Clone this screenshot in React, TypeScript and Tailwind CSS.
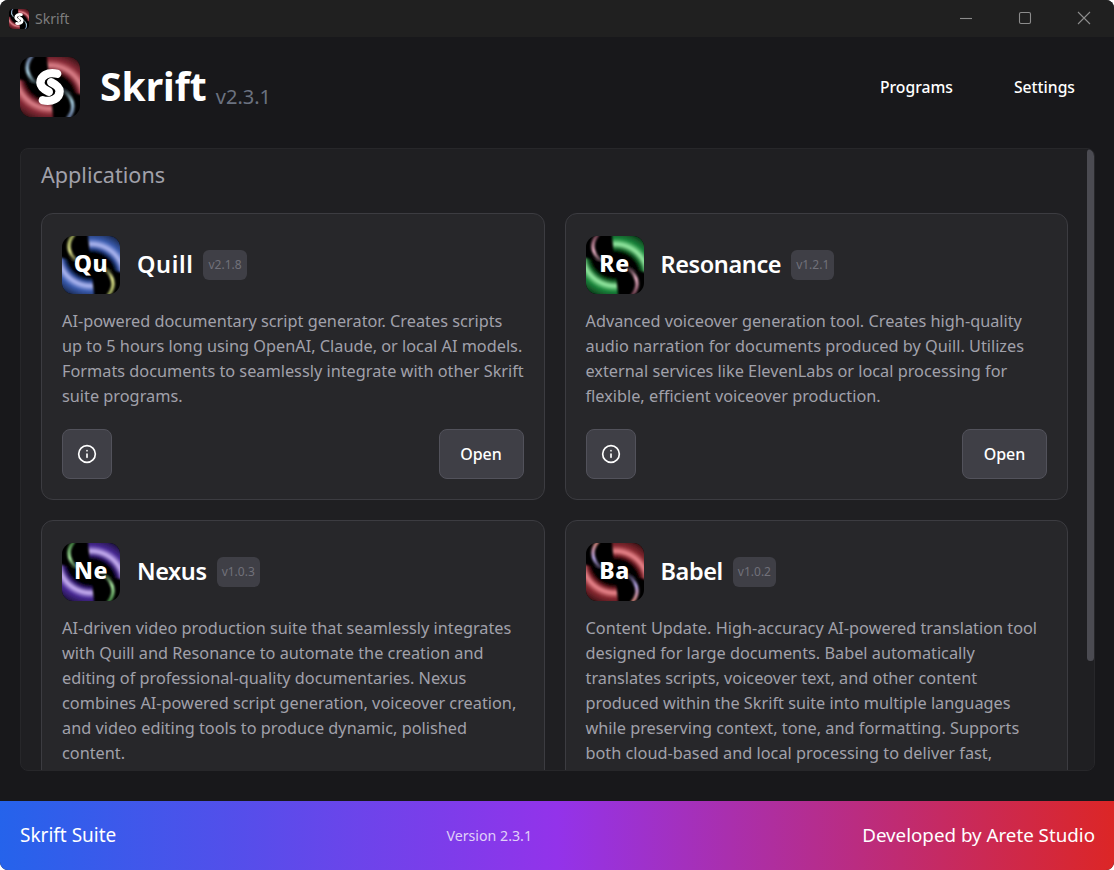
import React from "react";
import { Info } from "lucide-react";

function Swirl({ id, a, b, size, children }: { id: string; a: string[]; b: string[]; size: number; children?: React.ReactNode }) {
  return (
    <div className="relative shrink-0 overflow-hidden rounded-[19%] bg-black" style={{ width: size, height: size }}>
      <svg viewBox="0 0 100 100" className="absolute inset-0 h-full w-full">
        <defs>
          <radialGradient id={id + "a"} gradientUnits="userSpaceOnUse" cx="50" cy="70" r="90">
            <stop offset="0.46" stopColor="#000" />
            <stop offset="0.54" stopColor={a[0]} />
            <stop offset="0.62" stopColor={a[1]} />
            <stop offset="0.72" stopColor={a[2]} />
            <stop offset="1" stopColor="#000" />
          </radialGradient>
          <linearGradient id={id + "b"} x1="0.5" y1="0" x2="0.5" y2="1">
            <stop offset="0" stopColor={b[1]} />
            <stop offset="0.55" stopColor={b[0]} />
            <stop offset="1" stopColor="#000" />
          </linearGradient>
          <filter id={id + "f"} x="-30%" y="-30%" width="160%" height="160%">
            <feGaussianBlur stdDeviation="2.2" />
          </filter>
          <g id={id + "arm"}>
            <polygon points="50,52 44,-10 110,-10 110,64" fill={`url(#${id}a)`} />
            <path d="M20 -2 C6 14 10 36 36 50" fill="none" stroke={`url(#${id}b)`} strokeWidth="6" strokeLinecap="round" />
          </g>
        </defs>
        <g filter={`url(#${id}f)`}>
          <use href={`#${id}arm`} />
          <use href={`#${id}arm`} transform="rotate(180 50 50)" />
        </g>
      </svg>
      {children}
    </div>
  );
}

function AppIcon({ id, label, a, b }: { id: string; label: string; a: string[]; b: string[] }) {
  return (
    <Swirl id={id} a={a} b={b} size={58}>
      <span className="absolute inset-0 flex items-center justify-center pb-[3px] text-[23px] font-extrabold leading-none tracking-[0.6px] text-white">{label}</span>
    </Swirl>
  );
}

function SkriftLogo({ id, size }: { id: string; size: number }) {
  return (
    <Swirl id={id} a={["#7a2430", "#e0848c", "#8a2c38"]} b={["#a8d0e0", "#5a6a90"]} size={size}>
      <svg viewBox="0 0 100 100" className="absolute inset-0 h-full w-full">
        <path d="M62 28 C46 24 34 32 34 43 C34 50 40 54 48 58" fill="none" stroke="#fff" strokeWidth="14" strokeLinecap="round" />
        <path d="M38 72 C54 76 66 68 66 57 C66 50 60 46 52 42" fill="none" stroke="#fff" strokeWidth="14" strokeLinecap="round" />
      </svg>
    </Swirl>
  );
}

function WinGlyph({ children }: { children: React.ReactNode }) {
  return (
    <div className="flex w-[59px] justify-center">
      <svg width="14" height="14" viewBox="0 0 14 14" fill="none" stroke="#8c8c8c" strokeWidth="1.1">
        {children}
      </svg>
    </div>
  );
}

type CardProps = {
  id: string;
  label: string;
  name: string;
  nameFit: string;
  version: string;
  lines: string[];
  a: string[];
  b: string[];
};

function Card({ id, label, name, nameFit, version, lines, a, b }: CardProps) {
  return (
    <div className="flex flex-col rounded-xl border border-[#3c3c41] bg-[#27272a] px-5 pt-[22px] pb-5">
      <div className="flex h-[58px] items-center">
        <AppIcon id={id} label={label} a={a} b={b} />
        <span className={"ml-[17px] -translate-y-px text-[23.5px] font-semibold leading-8 text-white " + nameFit}>{name}</span>
        <span className="ml-[10px] rounded-md bg-[#3f3f46] px-[5px] py-[5px] text-xs leading-5 text-[#71717a]">{version}</span>
      </div>
      <p className="mt-[14.5px] text-[16.3px] leading-[25px] text-[#a1a1aa]">
        {lines.map((l, i) => (
          <span key={i} className="block whitespace-nowrap">{l}</span>
        ))}
      </p>
      <div className="mt-auto flex items-center justify-between pt-[20.5px]">
        <button className="flex h-[50px] w-[50px] items-center justify-center rounded-lg border border-[#52525b] bg-[#3f3f46] text-white">
          <Info size={20} strokeWidth={2} />
        </button>
        <button className="h-[50px] w-[85px] rounded-lg border border-[#52525b] bg-[#3f3f46] text-base font-medium text-white">Open</button>
      </div>
    </div>
  );
}

const cards: CardProps[] = [
  {
    id: "qu", label: "Qu", name: "Quill", nameFit: "tracking-[0.6px]", version: "v2.1.8",
    a: ["#2a4a9a", "#b4bcf5", "#3a5cb0"], b: ["#e4e890", "#8f9a50"],
    lines: ["AI-powered documentary script generator. Creates scripts", "up to 5 hours long using OpenAI, Claude, or local AI models.", "Formats documents to seamlessly integrate with other Skrift", "suite programs."],
  },
  {
    id: "re", label: "Re", name: "Resonance", nameFit: "tracking-[-0.4px]", version: "v1.2.1",
    a: ["#146a2c", "#9cf0a8", "#1c8a3e"], b: ["#e8b0c4", "#6a3a4a"],
    lines: ["Advanced voiceover generation tool. Creates high-quality", "audio narration for documents produced by Quill. Utilizes", "external services like ElevenLabs or local processing for", "flexible, efficient voiceover production."],
  },
  {
    id: "ne", label: "Ne", name: "Nexus", nameFit: "tracking-[-0.4px]", version: "v1.0.3",
    a: ["#3c2080", "#d0b8f8", "#4a2a98"], b: ["#a8e8a0", "#3a7a3a"],
    lines: ["AI-driven video production suite that seamlessly integrates", "with Quill and Resonance to automate the creation and", "editing of professional-quality documentaries. Nexus", "combines AI-powered script generation, voiceover creation,", "and video editing tools to produce dynamic, polished", "content."],
  },
  {
    id: "ba", label: "Ba", name: "Babel", nameFit: "tracking-[-0.4px]", version: "v1.0.2",
    a: ["#7a2028", "#f08a90", "#8a2a32"], b: ["#b0a0e0", "#d08070"],
    lines: ["Content Update. High-accuracy AI-powered translation tool", "designed for large documents. Babel automatically", "translates scripts, voiceover text, and other content", "produced within the Skrift suite into multiple languages", "while preserving context, tone, and formatting. Supports", "both cloud-based and local processing to deliver fast,"],
  },
];

export default function App() {
  return (
    <div className="flex h-[870px] w-[1114px] flex-col overflow-hidden rounded-lg bg-[#18181b] font-['Noto_Sans',sans-serif]">
      <div className="flex h-[37px] shrink-0 items-center bg-[#202020] pl-[9px]">
        <SkriftLogo id="tb" size={20} />
        <span className="ml-[6px] text-sm text-[#7d7d7d]">Skrift</span>
        <div className="ml-auto flex items-center pb-[2px] pr-px">
          <WinGlyph><path d="M1 7.5H13" /></WinGlyph>
          <WinGlyph><rect x="1.5" y="1.5" width="11" height="11" rx="1.5" /></WinGlyph>
          <WinGlyph><path d="M1 1L13 13M13 1L1 13" /></WinGlyph>
        </div>
      </div>

      <header className="flex h-[111px] shrink-0 items-start pl-5 pr-[39px] pt-5">
        <SkriftLogo id="hd" size={60} />
        <div className="ml-5 flex h-[60px] items-center">
          <span className="-translate-y-[2px] text-[39px] font-bold leading-none text-white">Skrift</span>
          <span className="ml-[9px] mt-[20px] text-xl leading-none text-[#6b7280]">v2.3.1</span>
        </div>
        <nav className="ml-auto flex h-[60px] items-center gap-[61px] pt-[2px] text-[15.7px] font-medium text-white">
          <span>Programs</span>
          <span>Settings</span>
        </nav>
      </header>

      <main className="mb-[30px] min-h-0 flex-1 pl-5 pr-[19px]">
        <div className="relative h-full overflow-hidden rounded-lg border border-[#27272a] bg-[#1f1f22] pl-5 pr-[26px] pt-[12px]">
          <h2 className="text-[21.6px] font-normal leading-7 text-[#a1a1aa]">Applications</h2>
          <div className="mt-[24px] grid grid-cols-2 gap-5">
            {cards.map((c) => <Card key={c.id} {...c} />)}
          </div>
          <div className="absolute right-0 top-0 h-[512px] w-[7px] rounded-sm bg-[#4b4b52]" />
        </div>
      </main>

      <footer className="flex h-[69px] shrink-0 items-center justify-between bg-linear-to-r/srgb from-[#2563eb] via-[#9333ea] to-[#dc2626] pl-5 pr-[19px] text-white">
        <span className="text-[19px] font-normal">Skrift Suite</span>
        <span className="text-[14.2px] font-normal text-[#e0d0f8]">Version 2.3.1</span>
        <span className="text-[18.75px] font-normal">Developed by Arete Studio</span>
      </footer>
    </div>
  );
}
